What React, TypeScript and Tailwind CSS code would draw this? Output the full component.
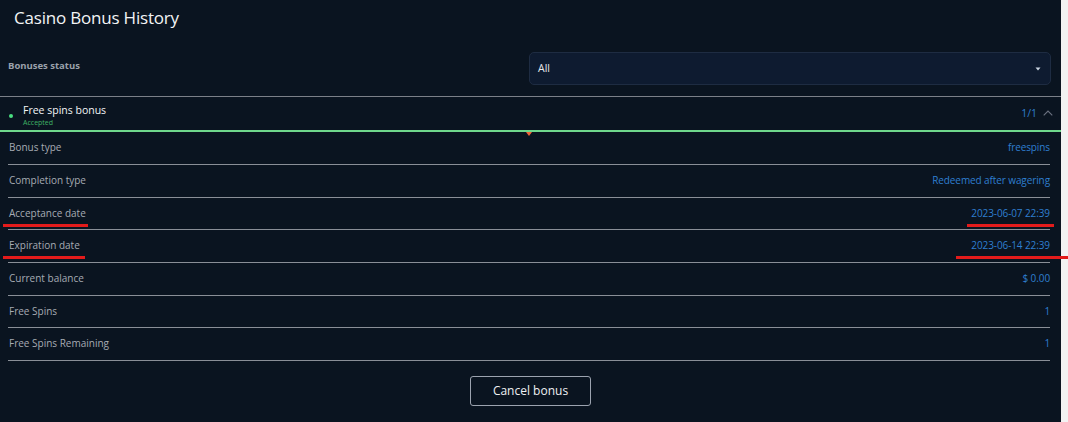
import React from "react";

const rows: { label: string; value: string; h: string }[] = [
  { label: "Bonus type", value: "freespins", h: "h-[33px]" },
  { label: "Completion type", value: "Redeemed after wagering", h: "h-[33px]" },
  { label: "Acceptance date", value: "2023-06-07 22:39", h: "h-[32px]" },
  { label: "Expiration date", value: "2023-06-14 22:39", h: "h-[33px]" },
  { label: "Current balance", value: "$ 0.00", h: "h-[33px]" },
  { label: "Free Spins", value: "1", h: "h-[32px]" },
  { label: "Free Spins Remaining", value: "1", h: "h-[33px]" },
];

export default function App() {
  return (
    <div
      className="flex w-[1068px] h-[422px] bg-[#f2f2f2] overflow-hidden"
      style={{ fontFamily: '"Open Sans", "Noto Sans", sans-serif' }}
    >
      <div className="relative w-[1061px] h-full bg-[#0a1420] text-white">
        <div className="px-[14px] pt-[5px] h-[50px] text-[17px] leading-[26px] text-[#f3f4f6] tracking-[-0.2px]">
          Casino Bonus History
        </div>

        <div className="flex items-start justify-between pl-[8px] pr-[10px] h-[46px]">
          <div className="pt-[9px] text-[9.5px] font-bold text-[#9aa1ab]">Bonuses status</div>
          <div className="mt-[2px] w-[522px] h-[33px] rounded-[5px] border border-[#1e2c42] bg-[#0e1b30] flex items-center justify-between pl-[8px] pr-[8px]">
            <span className="text-[10.5px] text-[#e5e7eb]">All</span>
            <svg width="6" height="4" viewBox="0 0 6 4" className="mr-[1px]">
              <path d="M0.5 0.5 L5.5 0.5 L3 3.5 Z" fill="#cbd5e1" />
            </svg>
          </div>
        </div>

        <div className="h-[1px] bg-[#7b8088]" />

        <div className="flex items-start justify-between h-[33px] pl-[9px] pr-[8px]">
          <div className="flex items-start pt-[6px]">
            <div className="w-[4px] h-[4px] rounded-full bg-[#4ade80] mt-[11px]" />
            <div className="ml-[10px] flex flex-col">
              <span className="text-[10.5px] leading-[14px] text-[#f3f4f6]">Free spins bonus</span>
              <span className="text-[7px] leading-[12px] text-[#3fb365]">Accepted</span>
            </div>
          </div>
          <div className="flex items-center gap-[6px] pt-[9px]">
            <span className="text-[10.5px] leading-[14px] text-[#2f7fd0]">1/1</span>
            <svg width="10" height="6" viewBox="0 0 10 6">
              <path d="M0.7 5.3 L5 1 L9.3 5.3" fill="none" stroke="#6b7280" strokeWidth="1.1" />
            </svg>
          </div>
        </div>

        <div className="relative h-[2px] bg-[#6fd88c]">
          <svg width="6" height="4" viewBox="0 0 6 4" className="absolute left-[526px] top-[2px]">
            <path d="M0 0 L6 0 L3 4 Z" fill="#f2673a" />
          </svg>
        </div>

        <div className="pl-[8px] pr-[11px]">
          {rows.map((r) => (
            <div
              key={r.label}
              className={`flex items-center justify-between ${r.h} border-b border-[#8a8f97] pl-[1px] pb-[1px]`}
            >
              <span className="text-[10px] text-[#a6abb3]">{r.label}</span>
              <span className="text-[10px] tracking-[-0.1px] text-[#2f7fd0]">{r.value}</span>
            </div>
          ))}
        </div>

        <div className="flex justify-center pt-[15px]">
          <button className="w-[121px] h-[30px] rounded-[3px] border border-[#9ca3af] text-[12px] text-[#eef0f3] bg-transparent">
            Cancel bonus
          </button>
        </div>

        <div className="absolute left-[3px] top-[224px] w-[85px] h-[3px] bg-[#e31b1b]" />
        <div className="absolute left-[967px] top-[224px] w-[87px] h-[3px] bg-[#e31b1b]" />
        <div className="absolute left-[3px] top-[256px] w-[82px] h-[3px] bg-[#e31b1b]" />
        <div className="absolute left-[956px] top-[256px] w-[112px] h-[3px] bg-[#e31b1b] z-10" />
      </div>
    </div>
  );
}
